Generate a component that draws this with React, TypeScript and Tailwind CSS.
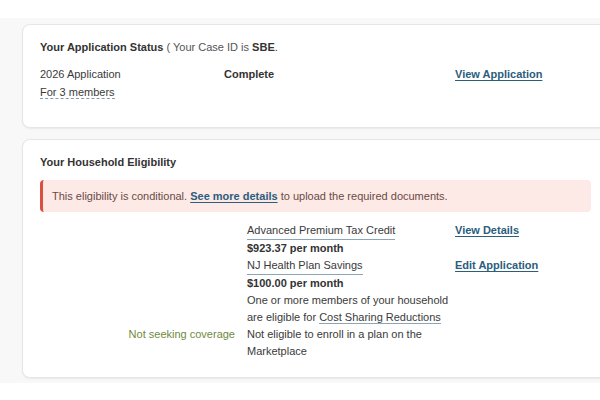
export default function App() {
  return (
    <div
      className="h-[400px] w-[600px] overflow-hidden bg-white text-[11px] text-[#3a3a3a]"
      style={{ fontFamily: '"Liberation Sans", Arial, sans-serif' }}
    >
      <div className="mt-[18px] flex w-[640px] flex-col gap-[11px] bg-[#f8f8f8] pb-[5px] pl-[22px] pt-[6px]">
        {/* Application status */}
        <section className="w-[587px] rounded-[8px] border border-[#e6e6e6] bg-white px-[17px] pb-[26px] pt-[14px] shadow-[0_1px_2px_rgba(0,0,0,0.06)]">
          <h2 className="leading-[16px] text-[#333]">
            <span className="font-bold">Your Application Status</span>
            <span className="text-[#555]"> ( Your Case ID is </span>
            <span className="font-bold">SBE</span>
            <span>.</span>
          </h2>
          <div className="mt-[10px] grid grid-cols-[184px_231px_1fr] leading-[18px]">
            <div>
              <div>2026 Application</div>
              <span className="border-b border-dashed border-[#7d9cb2]">For 3 members</span>
            </div>
            <div className="font-bold text-[#333]">Complete</div>
            <a href="#" className="font-bold text-[#2b5d7d] underline underline-offset-2">
              View Application
            </a>
          </div>
        </section>

        {/* Household eligibility */}
        <section className="w-[587px] rounded-[8px] border border-[#e6e6e6] bg-white px-[17px] pb-[17px] pt-[14px] shadow-[0_1px_2px_rgba(0,0,0,0.06)]">
          <h2 className="font-bold leading-[16px] text-[#333]">Your Household Eligibility</h2>
          <div className="mt-[10px] rounded-[4px] border-l-[3px] border-[#d9503c] bg-[#fde9e6] py-[8px] pl-[9px] leading-[16px] text-[#6a4b45]">
            This eligibility is conditional.{" "}
            <a href="#" className="font-bold text-[#2b5d7d] underline underline-offset-2">
              See more details
            </a>{" "}
            to upload the required documents.
          </div>
          <div className="mt-[10px] grid grid-cols-[207px_208px_1fr] leading-[17px]">
            <div className="flex flex-col pr-[12px] text-right text-[#6f8a3c]">
              <div className="mt-[104px]">Not seeking coverage</div>
            </div>
            <div className="flex flex-col">
              <span className="self-start border-b border-[#8aa7ba]">Advanced Premium Tax Credit</span>
              <span className="font-bold text-[#333]">$923.37 per month</span>
              <span className="self-start border-b border-[#8aa7ba]">NJ Health Plan Savings</span>
              <span className="font-bold text-[#333]">$100.00 per month</span>
              <span>One or more members of your household</span>
              <span>
                are eligible for{" "}
                <span className="border-b border-[#8aa7ba]">Cost Sharing Reductions</span>
              </span>
              <span>Not eligible to enroll in a plan on the Marketplace</span>
            </div>
            <div className="flex flex-col">
              <a href="#" className="self-start font-bold text-[#2b5d7d] underline underline-offset-2">
                View Details
              </a>
              <a href="#" className="mt-[18px] self-start font-bold text-[#2b5d7d] underline underline-offset-2">
                Edit Application
              </a>
            </div>
          </div>
        </section>
      </div>
    </div>
  );
}
